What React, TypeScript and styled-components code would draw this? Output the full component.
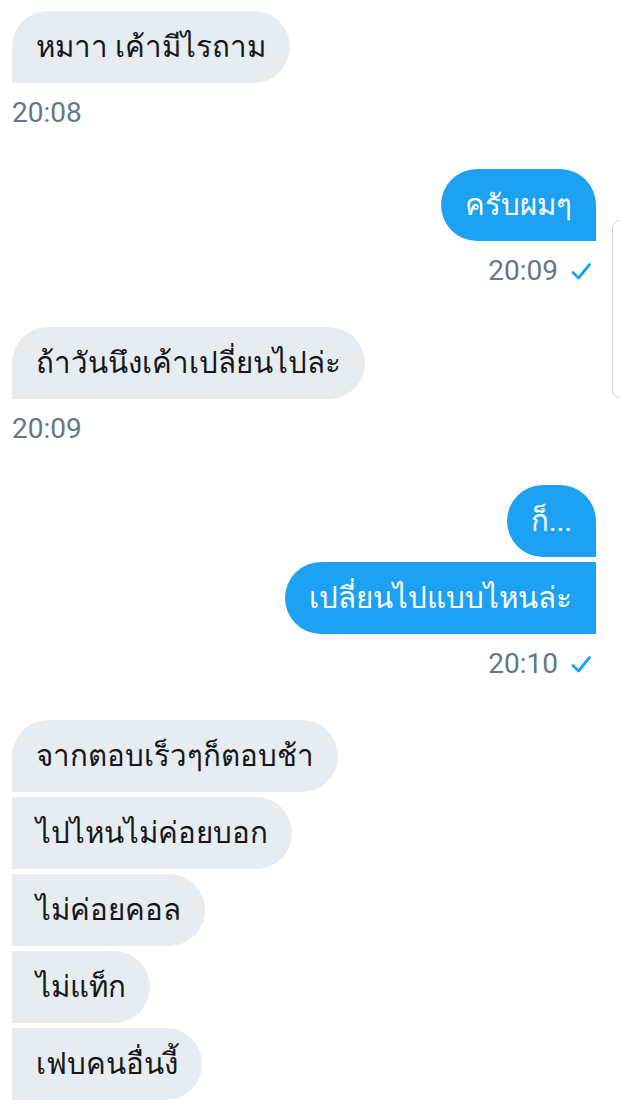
import { FC } from 'react';
import styled, { createGlobalStyle } from 'styled-components';

type Side = 'in' | 'out';

interface Group {
	side: Side;
	messages: string[];
	time: string;
}

const conversation: Group[] = [
	{ side: 'in', messages: ['หมาา เค้ามีไรถาม'], time: '20:08' },
	{ side: 'out', messages: ['ครับผมๆ'], time: '20:09' },
	{ side: 'in', messages: ['ถ้าวันนึงเค้าเปลี่ยนไปล่ะ'], time: '20:09' },
	{ side: 'out', messages: ['ก็...', 'เปลี่ยนไปแบบไหนล่ะ'], time: '20:10' },
	{
		side: 'in',
		messages: [
			'จากตอบเร็วๆก็ตอบช้า',
			'ไปไหนไม่ค่อยบอก',
			'ไม่ค่อยคอล',
			'ไม่แท็ก',
			'เฟบคนอื่นงี้',
		],
		time: '',
	},
];

const CheckIcon: FC = () => (
	<svg width="20" height="20" viewBox="0 0 20 20" fill="none">
		<path
			d="M2 11.5 L7.5 17 L18.5 3.5"
			stroke="#1DA1F2"
			strokeWidth="2.8"
			strokeLinecap="round"
			strokeLinejoin="round"
		/>
	</svg>
);

const App: FC = () => {
	return (
		<>
			<GlobalStyle />
			<Screen>
				<Thread>
					{conversation.map((group, gi) => (
						<MessageGroup key={gi} side={group.side}>
							{group.messages.map((text, mi) => (
								<Bubble
									key={mi}
									side={group.side}
									first={mi === 0}
								>
									{text}
								</Bubble>
							))}
							{group.time && (
								<Meta>
									<Time>{group.time}</Time>
									{group.side === 'out' && <CheckIcon />}
								</Meta>
							)}
						</MessageGroup>
					))}
				</Thread>
				<SidePanelEdge />
			</Screen>
		</>
	);
};

const GlobalStyle = createGlobalStyle`
	html, body {
		margin: 0;
		padding: 0;
		background: #ffffff;
	}
	body {
		font-family: Roboto, "Noto Sans", "DejaVu Sans", sans-serif;
	}
`;

const Screen = styled.div`
	position: relative;
	width: 620px;
	height: 1104px;
	overflow: hidden;
	background: #ffffff;
`;

const Thread = styled.div`
	display: flex;
	flex-direction: column;
	gap: 40px;
	padding: 11px 24px 0 12px;
`;

const MessageGroup = styled.div<{ side: Side }>`
	display: flex;
	flex-direction: column;
	align-items: ${({ side }) => (side === 'out' ? 'flex-end' : 'flex-start')};
	gap: 5px;
`;

const Bubble = styled.div<{ side: Side; first: boolean }>`
	box-sizing: border-box;
	height: 72px;
	padding: 0 24px;
	display: flex;
	align-items: center;
	font-size: 29.5px;
	line-height: 36px;
	white-space: nowrap;
	background: ${({ side }) => (side === 'out' ? '#1DA1F2' : '#E6ECF0')};
	color: ${({ side }) => (side === 'out' ? '#ffffff' : '#14171A')};
	border-radius: ${({ side, first }) =>
		side === 'out'
			? first
				? '36px 36px 0 36px'
				: '36px 0 0 36px'
			: first
				? '36px 36px 36px 0'
				: '0 36px 36px 0'};
`;

const Meta = styled.div`
	display: flex;
	align-items: center;
	gap: 13px;
	margin-top: 9px;
	padding-right: 5px;
`;

const Time = styled.span`
	font-size: 28px;
	line-height: 32px;
	color: #657786;
`;

const SidePanelEdge = styled.div`
	position: absolute;
	left: 612px;
	top: 220px;
	width: 30px;
	height: 178px;
	border: 1.5px solid #d4d7da;
	border-radius: 8px;
	box-sizing: border-box;
`;

export default App;
